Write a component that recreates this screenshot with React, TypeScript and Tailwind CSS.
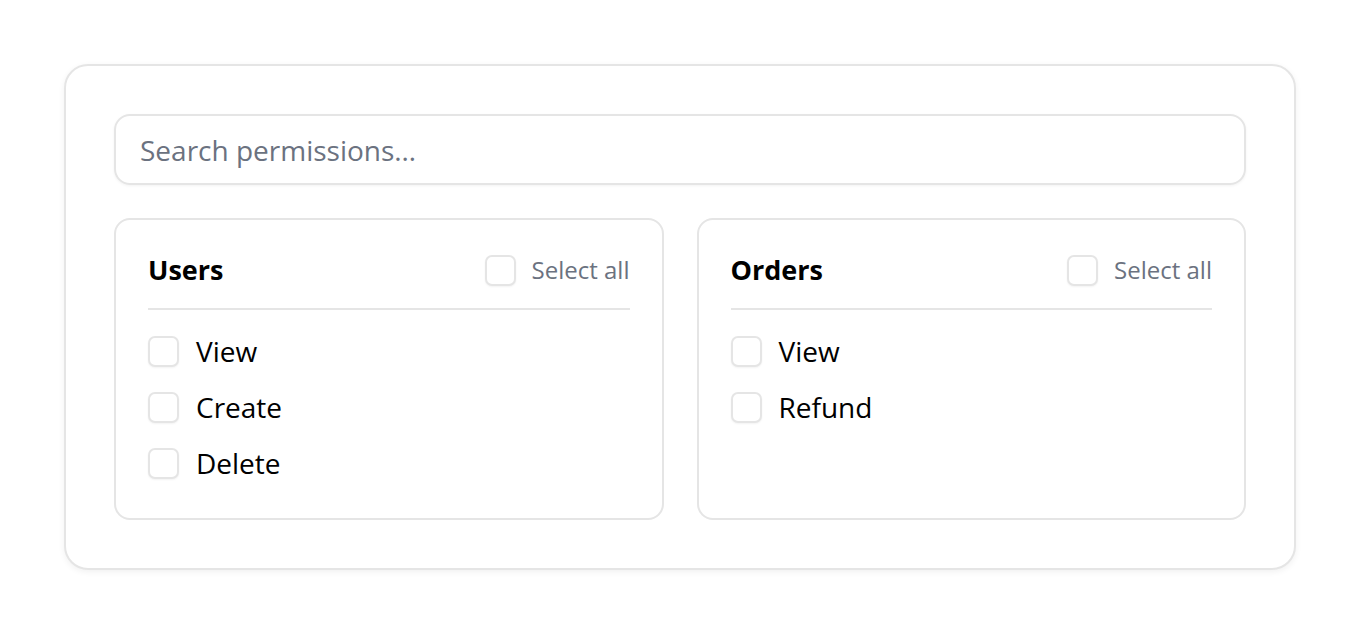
import { useState } from 'react';

type Group = { name: string; perms: string[] };

const GROUPS: Group[] = [
  { name: 'Users', perms: ['View', 'Create', 'Delete'] },
  { name: 'Orders', perms: ['View', 'Refund'] },
];

function Box() {
  return (
    <span className="block h-[31px] w-[31px] shrink-0 rounded-[7px] border-2 border-[#e5e5e5] bg-white shadow-[0_1px_2px_rgba(0,0,0,0.05)]" />
  );
}

function Panel({ group }: { group: Group }) {
  return (
    <div className="rounded-2xl border-2 border-[#e5e5e5] px-8 pt-8 pb-[35px]">
      <div className="flex h-[36px] items-center justify-between">
        <h2 className="text-[27px] font-bold text-black">{group.name}</h2>
        <label className="flex items-center gap-4 text-[24px] text-[#6b7280]">
          <Box />
          Select all
        </label>
      </div>
      <div className="mt-[20px] h-[2px] bg-[#e5e5e5]" />
      <ul className="mt-[21px] flex flex-col gap-4">
        {group.perms.map((p) => (
          <li key={p} className="flex h-10 items-center gap-[17px] text-[28px] text-black">
            <Box />
            {p}
          </li>
        ))}
      </ul>
    </div>
  );
}

export default function App() {
  const [query, setQuery] = useState('');

  return (
    <div className="min-h-screen bg-white px-[64px] pt-[64px] font-['Open_Sans',sans-serif]">
      <div className="rounded-3xl border-2 border-[#e5e5e5] bg-white p-12 shadow-[0_2px_6px_rgba(0,0,0,0.06)]">
        <input
          value={query}
          onChange={(e) => setQuery(e.target.value)}
          placeholder="Search permissions…"
          className="h-[71px] w-full rounded-2xl border-2 border-[#e5e5e5] px-6 text-[28px] text-black shadow-[0_1px_3px_rgba(0,0,0,0.05)] outline-none placeholder:text-[#6b7280]"
        />
        <div className="mt-[33px] grid grid-cols-2 gap-[33px]">
          {GROUPS.map((g) => (
            <Panel key={g.name} group={g} />
          ))}
        </div>
      </div>
    </div>
  );
}
